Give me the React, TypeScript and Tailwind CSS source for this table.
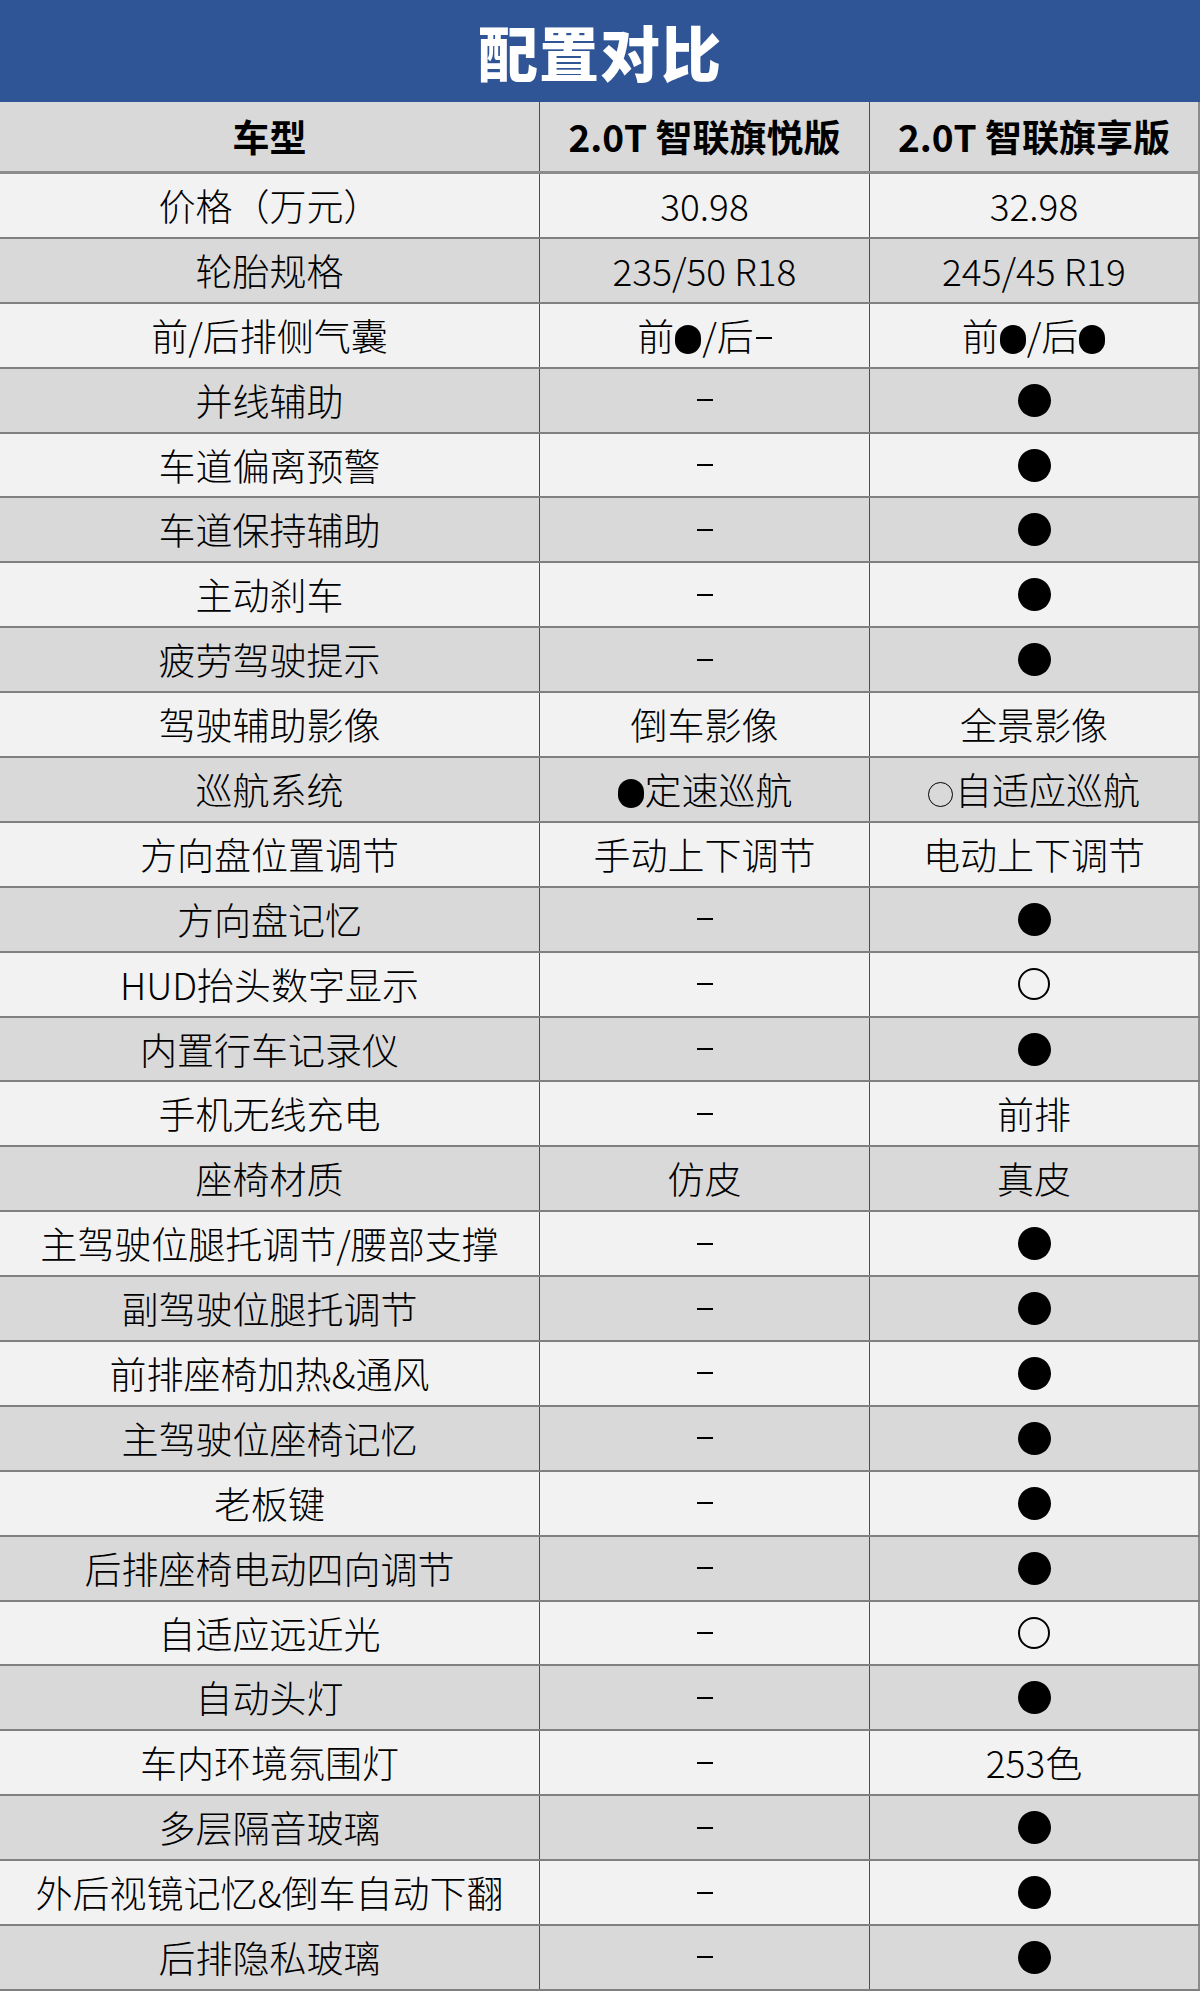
type Cell = string | "dot" | "ring" | "dash";

interface Row {
    name: string;
    a: Cell;
    b: Cell;
}

const rows: Row[] = [
    { name: "价格（万元）", a: "30.98", b: "32.98" },
    { name: "轮胎规格", a: "235/50 R18", b: "245/45 R19" },
    { name: "前/后排侧气囊", a: "前●/后-", b: "前●/后●" },
    { name: "并线辅助", a: "dash", b: "dot" },
    { name: "车道偏离预警", a: "dash", b: "dot" },
    { name: "车道保持辅助", a: "dash", b: "dot" },
    { name: "主动刹车", a: "dash", b: "dot" },
    { name: "疲劳驾驶提示", a: "dash", b: "dot" },
    { name: "驾驶辅助影像", a: "倒车影像", b: "全景影像" },
    { name: "巡航系统", a: "●定速巡航", b: "○自适应巡航" },
    { name: "方向盘位置调节", a: "手动上下调节", b: "电动上下调节" },
    { name: "方向盘记忆", a: "dash", b: "dot" },
    { name: "HUD抬头数字显示", a: "dash", b: "ring" },
    { name: "内置行车记录仪", a: "dash", b: "dot" },
    { name: "手机无线充电", a: "dash", b: "前排" },
    { name: "座椅材质", a: "仿皮", b: "真皮" },
    { name: "主驾驶位腿托调节/腰部支撑", a: "dash", b: "dot" },
    { name: "副驾驶位腿托调节", a: "dash", b: "dot" },
    { name: "前排座椅加热&通风", a: "dash", b: "dot" },
    { name: "主驾驶位座椅记忆", a: "dash", b: "dot" },
    { name: "老板键", a: "dash", b: "dot" },
    { name: "后排座椅电动四向调节", a: "dash", b: "dot" },
    { name: "自适应远近光", a: "dash", b: "ring" },
    { name: "自动头灯", a: "dash", b: "dot" },
    { name: "车内环境氛围灯", a: "dash", b: "253色" },
    { name: "多层隔音玻璃", a: "dash", b: "dot" },
    { name: "外后视镜记忆&倒车自动下翻", a: "dash", b: "dot" },
    { name: "后排隐私玻璃", a: "dash", b: "dot" },
];

// inline ● / ○ inside a text value
function renderText(text: string) {
    const parts = text.split(/([●○])/);
    return parts.map((p, i) => {
        if (p === "●") {
            return <span key={i} className="inline-block w-[26px] h-[29px] rounded-full bg-black mx-[1px] align-[-3px]">{""}</span>;
        }
        if (p === "○") {
            return <span key={i} className="inline-block w-[25px] h-[25px] rounded-full border-[1.5px] border-black mr-[2px] align-[-2px]">{""}</span>;
        }
        return <span key={i}>{p}</span>;
    });
}

function CellBody({ value }: { value: Cell }) {
    if (value === "dot") return <span className="block w-[33px] h-[33px] rounded-full bg-black" />;
    if (value === "ring") return <span className="block w-[32px] h-[32px] rounded-full border-2 border-black" />;
    if (value === "dash") return <span className="block w-[16px] h-[2px] bg-black" />;
    if (value.endsWith("-")) {
        return <span>{renderText(value.slice(0, -1))}<span className="inline-block w-[16px] h-[2px] bg-black ml-[2px] align-[12px]" /></span>;
    }
    return <span>{renderText(value)}</span>;
}

export default function App() {
    return (
        <div className="w-[1200px] h-[1991px] overflow-hidden bg-[#f2f2f2] text-black" style={{ fontFamily: '"Noto Sans CJK SC", "Noto Sans", sans-serif' }}>
            <div className="h-[102px] bg-[#2f5597] flex items-center justify-center">
                <h1 className="text-white text-[60px] font-black tracking-[1px] leading-none">配置对比</h1>
            </div>

            <div className="grid grid-cols-[540px_330px_330px] h-[72px] bg-[#d9d9d9] border-b-[3px] border-[#8c8c8c] text-[37px] font-bold">
                <div className="flex items-center justify-center border-r border-[#4d4d4d]">车型</div>
                <div className="flex items-center justify-center border-r border-[#4d4d4d]">2.0T 智联旗悦版</div>
                <div className="flex items-center justify-center border-r-2 border-[#8c8c8c]">2.0T 智联旗享版</div>
            </div>

            {rows.map((row, idx) => (
                <div key={row.name}
                    className={`grid grid-cols-[540px_330px_330px] h-[64.9px] border-b-2 border-[#808080] text-[37px] font-light leading-none ${idx % 2 === 0 ? "bg-[#f2f2f2]" : "bg-[#d9d9d9]"}`}>
                    <div className="flex items-center justify-center border-r border-[#4d4d4d]">{row.name}</div>
                    <div className="flex items-center justify-center border-r border-[#4d4d4d]"><CellBody value={row.a} /></div>
                    <div className="flex items-center justify-center border-r-2 border-[#8c8c8c]"><CellBody value={row.b} /></div>
                </div>
            ))}
        </div>
    );
}
